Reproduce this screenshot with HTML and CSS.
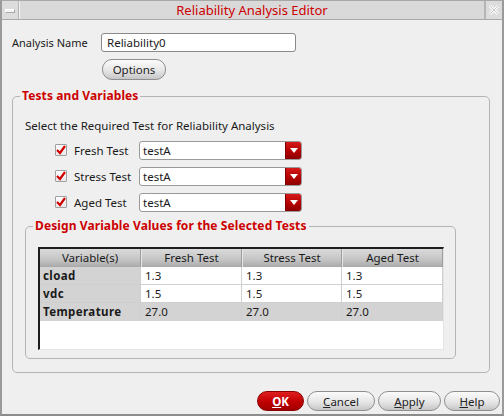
FILE: index.html
```html
<!DOCTYPE html>
<html>
<head>
<meta charset="utf-8">
<link rel="stylesheet" href="styles.css">
</head>
<body>
<div class="win">
  <div class="titlebar">
    <div class="tb-btn"><span class="min-glyph"></span></div>
    <div class="title">Reliability Analysis Editor</div>
    <div class="tb-btn close">
      <svg width="12" height="12" viewBox="0 0 12 12"><path d="M2 2 L10 10 M10 2 L2 10" stroke="#fbfbfb" stroke-width="3" fill="none"/><path d="M2 2 L10 10 M10 2 L2 10" stroke="#c8c8c8" stroke-width="1" fill="none"/></svg>
    </div>
  </div>
  <div class="content">
    <div class="name-row">
      <span class="label">Analysis Name</span>
      <div class="input">Reliability0</div>
    </div>
    <div class="opt-row"><div class="pill">Options</div></div>

    <fieldset class="group outer">
      <legend>Tests and Variables</legend>
      <div class="hint">Select the Required Test for Reliability Analysis</div>
      <div class="tests">
        <div class="test-row">
          <span class="cb"><svg width="10" height="10" viewBox="0 0 10 10"><path d="M1 5 L4 8 L9 1" stroke="#d00000" stroke-width="2.2" fill="none"/></svg></span>
          <span class="tlabel">Fresh Test</span>
          <div class="combo"><span class="cval">testA</span><span class="drop"><svg width="8" height="5" viewBox="0 0 8 5"><path d="M0 0 L8 0 L4 5 Z" fill="#fff"/></svg></span></div>
        </div>
        <div class="test-row">
          <span class="cb"><svg width="10" height="10" viewBox="0 0 10 10"><path d="M1 5 L4 8 L9 1" stroke="#d00000" stroke-width="2.2" fill="none"/></svg></span>
          <span class="tlabel">Stress Test</span>
          <div class="combo"><span class="cval">testA</span><span class="drop"><svg width="8" height="5" viewBox="0 0 8 5"><path d="M0 0 L8 0 L4 5 Z" fill="#fff"/></svg></span></div>
        </div>
        <div class="test-row">
          <span class="cb"><svg width="10" height="10" viewBox="0 0 10 10"><path d="M1 5 L4 8 L9 1" stroke="#d00000" stroke-width="2.2" fill="none"/></svg></span>
          <span class="tlabel">Aged Test</span>
          <div class="combo"><span class="cval">testA</span><span class="drop"><svg width="8" height="5" viewBox="0 0 8 5"><path d="M0 0 L8 0 L4 5 Z" fill="#fff"/></svg></span></div>
        </div>
      </div>

      <fieldset class="group inner">
        <legend>Design Variable Values for the Selected Tests</legend>
        <div class="table">
          <div class="tr head">
            <div class="td">Variable(s)</div>
            <div class="td">Fresh Test</div>
            <div class="td">Stress Test</div>
            <div class="td">Aged Test</div>
          </div>
          <div class="tr">
            <div class="td key">cload</div>
            <div class="td">1.3</div>
            <div class="td">1.3</div>
            <div class="td">1.3</div>
          </div>
          <div class="tr">
            <div class="td key">vdc</div>
            <div class="td">1.5</div>
            <div class="td">1.5</div>
            <div class="td">1.5</div>
          </div>
          <div class="tr sel">
            <div class="td key">Temperature</div>
            <div class="td">27.0</div>
            <div class="td">27.0</div>
            <div class="td">27.0</div>
          </div>
        </div>
      </fieldset>
    </fieldset>

    <div class="buttons">
      <div class="pill ok"><u>O</u>K</div>
      <div class="pill b-cancel"><u>C</u>ancel</div>
      <div class="pill b-apply"><u>A</u>pply</div>
      <div class="pill b-help"><u>H</u>elp</div>
    </div>
  </div>
</div>
</body>
</html>
```
FILE: styles.css
```css
* { box-sizing: border-box; }
html, body { margin: 0; padding: 0; }
body {
  width: 504px;
  height: 416px;
  overflow: hidden;
  font-family: "Noto Sans", "Open Sans", sans-serif;
  font-size: 11px;
  color: #1a1a1a;
  background: #efefef;
}
.win {
  width: 504px;
  height: 416px;
  border-left: 2px solid #9a9a9a;
  border-right: 2px solid #9a9a9a;
  border-bottom: 2px solid #8c8c8c;
  border-top: 1px solid #a8a8a8;
  background: #efefef;
  display: flex;
  flex-direction: column;
}
.titlebar {
  height: 19px;
  display: flex;
  align-items: stretch;
  background: #d9d9d9;
  border-bottom: 1px solid #a9a9a9;
}
.tb-btn {
  width: 17px;
  flex: none;
  display: flex;
  align-items: center;
  justify-content: center;
  border-right: 1px solid #b5b5b5;
  background: #dcdcdc;
}
.tb-btn.close {
  border-right: none;
  border-left: 1px solid #b5b5b5;
}
.min-glyph {
  width: 10px;
  height: 4px;
  background: #f4f4f4;
  border: 1px solid #a8a8a8;
  border-top-color: #fff;
  border-left-color: #fff;
  margin-top: 2px;
}
.title {
  flex: 1;
  text-align: center;
  color: #cc0000;
  font-size: 13px;
  line-height: 18px;
  border-left: 1px solid #f2f2f2;
  border-right: 1px solid #b5b5b5;
}
.content {
  flex: 1;
  padding: 13px 0 0 10px;
  display: flex;
  flex-direction: column;
}
.name-row {
  display: flex;
  align-items: center;
  height: 18px;
}
.label {
  width: 89px;
}
.input {
  width: 195px;
  height: 19px;
  border: 1px solid #8a8a8a;
  border-radius: 3px;
  background: #fff;
  padding: 0 5px;
  line-height: 17px;
  font-size: 11.5px;
}
.opt-row {
  margin-top: 8px;
  padding-left: 90px;
  display: flex;
}
.pill {
  height: 21px;
  border: 1px solid #8e8e8e;
  border-radius: 10px;
  background: linear-gradient(#fbfbfb, #e6e6e6 55%, #c6c6c6);
  display: flex;
  align-items: center;
  justify-content: center;
  font-size: 11.5px;
  color: #222;
}
.opt-row .pill { width: 64px; }

.group {
  margin: 0;
  padding: 0;
  border: 1px solid #b4b4b4;
  border-radius: 5px;
  min-width: 0;
}
.group legend {
  margin-left: -5px;
  padding: 0 2px;
  color: #cc0000;
  font-weight: bold;
  font-size: 12px;
  line-height: 14px;
  letter-spacing: 0.1px;
}
.outer {
  margin-top: 9px;
  width: 478px;
  height: 284px;
  padding: 0 0 0 12px;
}
.hint {
  margin-top: 15px;
  line-height: 16px;
  font-size: 11.5px;
}
.tests {
  margin-top: 7px;
  display: flex;
  flex-direction: column;
  gap: 8px;
  padding-left: 30px;
}
.test-row {
  display: flex;
  align-items: center;
  height: 18px;
}
.cb {
  width: 12px;
  height: 12px;
  border: 1px solid #a0a0a0;
  background: linear-gradient(#fff, #e8e8e8);
  display: flex;
  align-items: center;
  justify-content: center;
  border-radius: 1px;
}
.tlabel {
  margin-left: 7px;
  width: 65px;
  font-size: 11.5px;
}
.combo {
  width: 163px;
  height: 19px;
  border: 1px solid #9a9a9a;
  border-radius: 3px;
  background: #fff;
  display: flex;
  overflow: hidden;
}
.cval {
  flex: 1;
  padding-left: 3px;
  line-height: 17px;
  font-size: 11.5px;
}
.drop {
  width: 16px;
  background: linear-gradient(#d51a1a, #b00000 60%, #8c0000);
  display: flex;
  align-items: center;
  justify-content: center;
  border-left: 1px solid #800000;
}
.inner {
  margin-top: 8px;
  width: 431px;
  height: 140px;
  padding: 14px 0 0 12px;
}
.table {
  width: 406px;
  height: 103px;
  background: #fff;
  border-top: 2px solid #1e1e1e;
  border-left: 2px solid #1e1e1e;
  border-right: 1px solid #e4e4e4;
  border-bottom: 1px solid #e4e4e4;
  display: flex;
  flex-direction: column;
}
.tr {
  display: grid;
  grid-template-columns: 101px 101px 100px 101px;
  height: 18px;
  border-bottom: 1px solid #cfcfcf;
}
.tr.head {
  height: 18px;
  background: linear-gradient(#dadada, #c4c4c4 60%, #a9a9a9);
  border-bottom: none;
}
.td {
  border-right: 1px solid #cfcfcf;
  padding-left: 4px;
  line-height: 17px;
  font-size: 11.5px;
  white-space: nowrap;
}
.head .td {
  text-align: center;
  padding: 0;
  border-right: 1px solid #9d9d9d;
  border-left: 1px solid #e6e6e6;
  line-height: 18px;
}
.head .td:first-child { border-left: none; }
.td.key {
  background: #d3d3d3;
  font-weight: bold;
  padding-left: 3px;
  letter-spacing: 0.4px;
}
.tr.sel { background: #d3d3d3; border-bottom: none; height: 18px; }
.buttons {
  margin-top: 18px;
  padding-left: 245px;
  display: flex;
  gap: 3px;
}
.buttons .pill { height: 20px; }
.ok {
  width: 47px;
  background: linear-gradient(#e02020, #c00000 55%, #a00000);
  border-color: #8a0000;
  color: #fff;
  font-weight: bold;
}
.b-cancel { width: 68px; }
.b-apply { width: 63px; }
.b-help { width: 56px; }
```
